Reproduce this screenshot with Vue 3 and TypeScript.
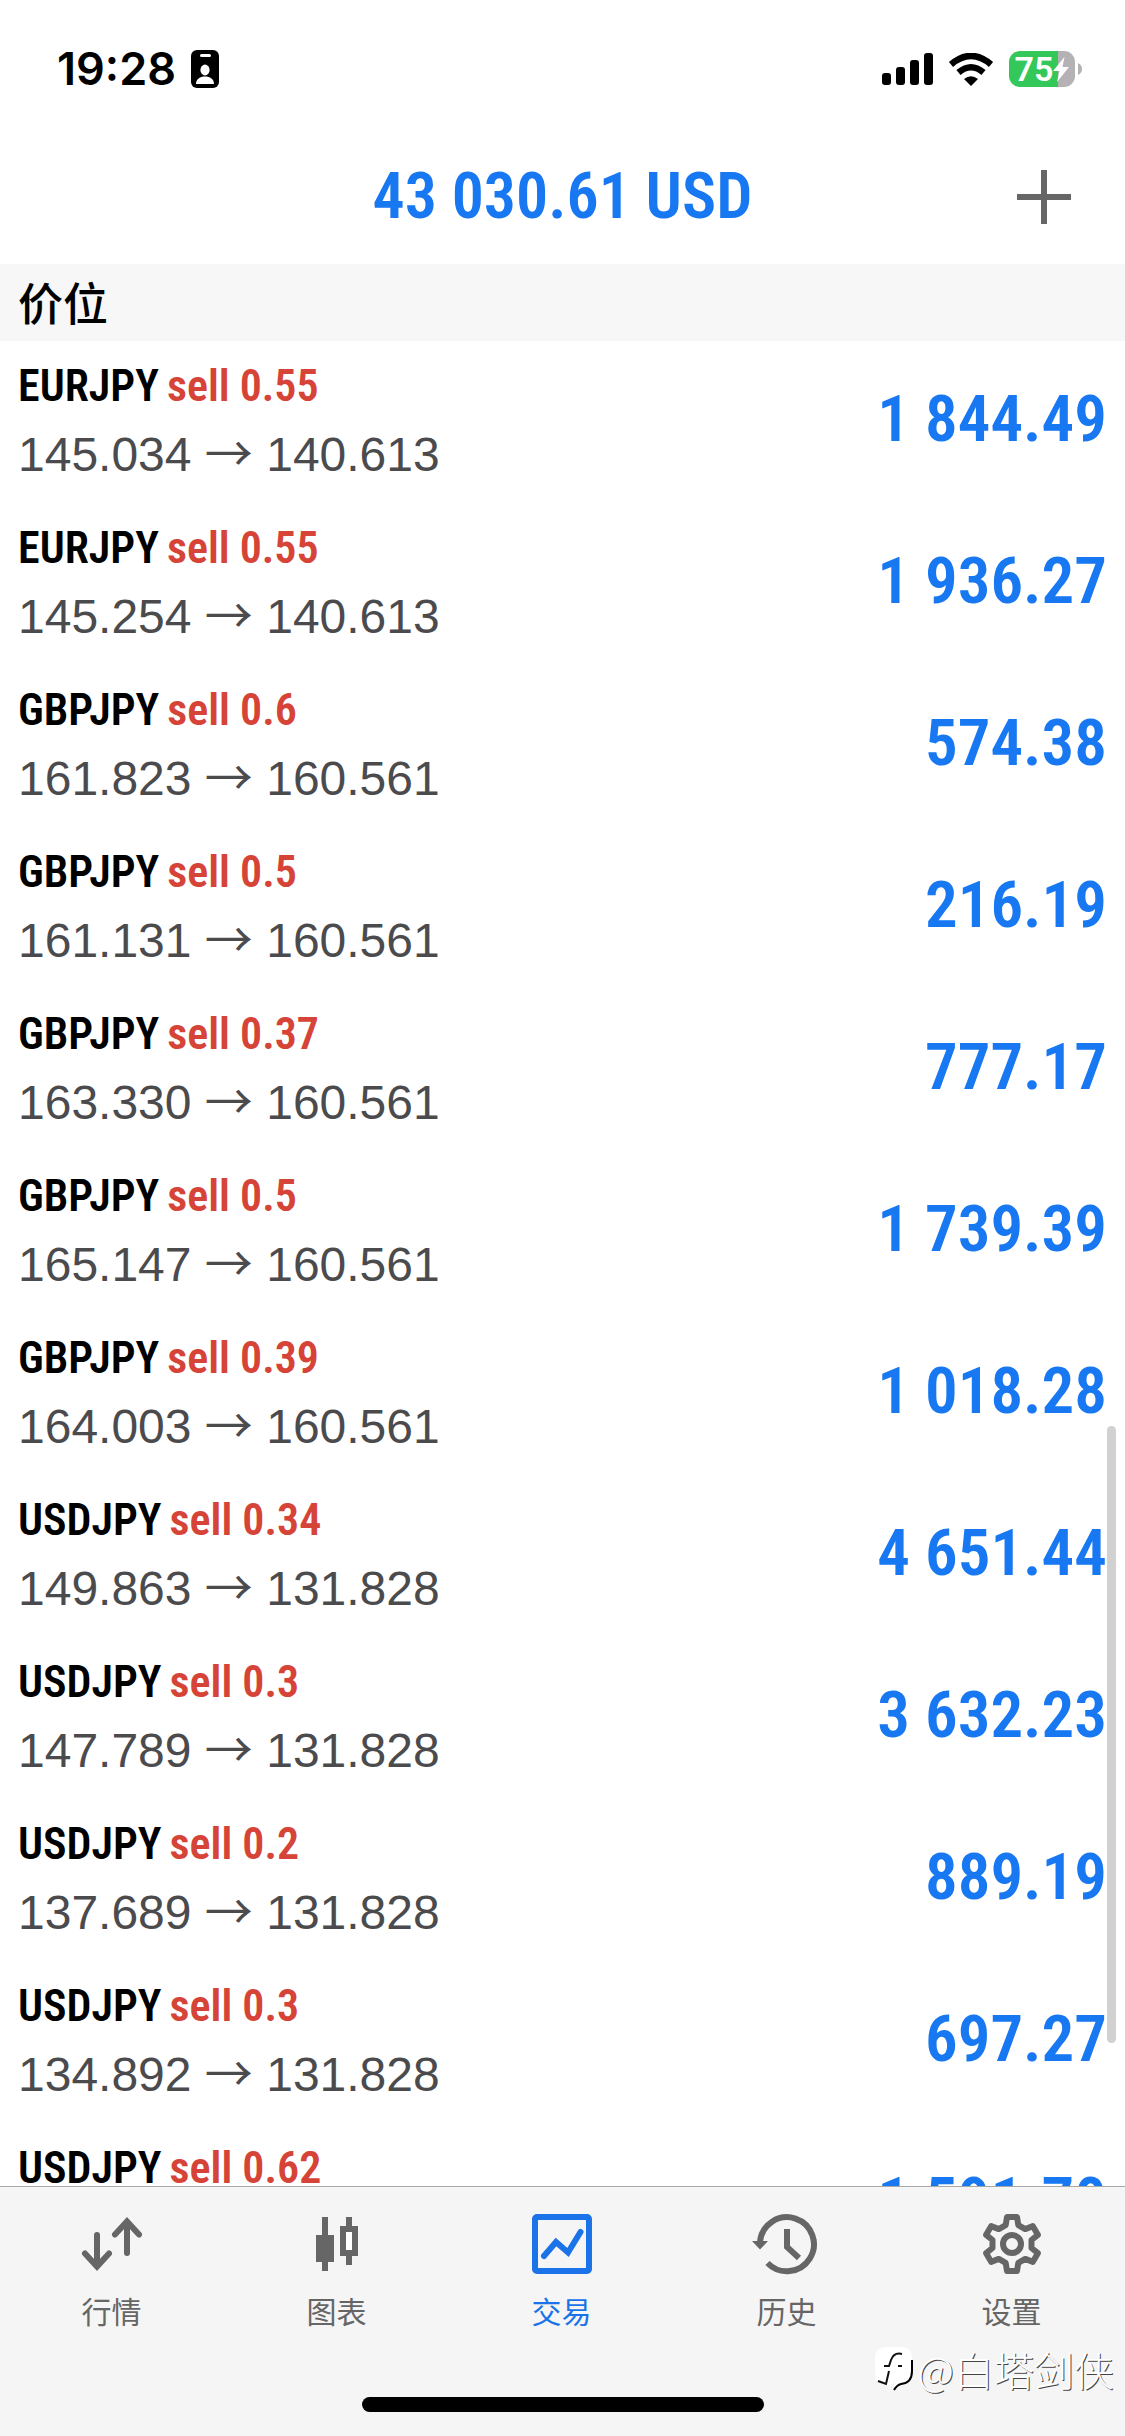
<script setup lang="ts">
interface Position {
  symbol: string
  volume: string
  open?: string
  current?: string
  profit: string
}

const balance = '43 030.61 USD'

const positions: Position[] = [
  { symbol: 'EURJPY', volume: '0.55', open: '145.034', current: '140.613', profit: '1 844.49' },
  { symbol: 'EURJPY', volume: '0.55', open: '145.254', current: '140.613', profit: '1 936.27' },
  { symbol: 'GBPJPY', volume: '0.6', open: '161.823', current: '160.561', profit: '574.38' },
  { symbol: 'GBPJPY', volume: '0.5', open: '161.131', current: '160.561', profit: '216.19' },
  { symbol: 'GBPJPY', volume: '0.37', open: '163.330', current: '160.561', profit: '777.17' },
  { symbol: 'GBPJPY', volume: '0.5', open: '165.147', current: '160.561', profit: '1 739.39' },
  { symbol: 'GBPJPY', volume: '0.39', open: '164.003', current: '160.561', profit: '1 018.28' },
  { symbol: 'USDJPY', volume: '0.34', open: '149.863', current: '131.828', profit: '4 651.44' },
  { symbol: 'USDJPY', volume: '0.3', open: '147.789', current: '131.828', profit: '3 632.23' },
  { symbol: 'USDJPY', volume: '0.2', open: '137.689', current: '131.828', profit: '889.19' },
  { symbol: 'USDJPY', volume: '0.3', open: '134.892', current: '131.828', profit: '697.27' },
  { symbol: 'USDJPY', volume: '0.62', profit: '1 591.70' },
]

const tabs = [
  { id: 'quotes', label: '行情' },
  { id: 'charts', label: '图表' },
  { id: 'trade', label: '交易' },
  { id: 'history', label: '历史' },
  { id: 'settings', label: '设置' },
]
const activeTab = 'trade'

// One tooth and one valley of the settings gear, repeated every 60 degrees.
const toothProfile = [[-5, -27], [5, -27], [6.3, -18.9], [13.2, -14.9]]
const gearPoints = Array.from({ length: 6 }, (_, i) => {
  const a = (i * Math.PI) / 3
  return toothProfile
    .map(([x, y]) => `${(30 + x * Math.cos(a) - y * Math.sin(a)).toFixed(2)},${(30 + x * Math.sin(a) + y * Math.cos(a)).toFixed(2)}`)
    .join(' ')
}).join(' ')
</script>

<template>
  <div class="screen">
    <div class="status">
      <div class="status-left">
        <span class="time">19:28</span>
        <svg class="badge" viewBox="0 0 28 38" aria-hidden="true">
          <rect width="28" height="38" rx="6" />
          <rect x="9" y="4" width="11" height="3" rx="1.5" fill="#fff" />
          <ellipse cx="14" cy="20" rx="4.6" ry="5.4" fill="#fff" />
          <path d="M5 34c0-5 4-7.500 9-7.500s9 2.500 9 7.500z" fill="#fff" />
        </svg>
      </div>
      <div class="status-right">
        <svg class="signal" viewBox="0 0 51 32" aria-hidden="true">
          <rect x="0" y="20" width="9" height="12" rx="3" />
          <rect x="14" y="14" width="9" height="18" rx="3" />
          <rect x="28" y="7" width="9" height="25" rx="3" />
          <rect x="42" y="0" width="9" height="32" rx="3" />
        </svg>
        <svg class="wifi" viewBox="0 0 46 33" aria-hidden="true">
          <path d="M3 11.500Q23-5.500 43 11.500" fill="none" stroke="#000" stroke-width="6.500" />
          <path d="M10.500 19.500Q23 9 35.500 19.500" fill="none" stroke="#000" stroke-width="6.500" />
          <path d="M23 33 16 26Q23 20.500 30 26Z" />
        </svg>
        <div class="battery">
          <span>75</span>
          <svg viewBox="0 0 16 25" aria-hidden="true"><path d="M11.500 0 0 14h6.500L4 25 16 10H9.500z" fill="#fff" /></svg>
        </div>
        <svg class="nub" viewBox="0 0 4 12" aria-hidden="true"><path d="M0 0q4 2 4 6t-4 6z" fill="#b5b2b5" /></svg>
      </div>
    </div>

    <header class="header">
      <h1>{{ balance }}</h1>
      <button class="add" type="button" aria-label="新订单">
        <svg viewBox="0 0 54 54"><path d="M0 27H54M27 0V54" stroke="#666" stroke-width="6" /></svg>
      </button>
    </header>

    <h2 class="section">价位</h2>

    <main class="list-area">
      <ul class="list">
        <li v-for="(p, i) in positions" :key="i" class="row">
          <div class="info">
            <div class="deal">
              <span>{{ p.symbol }}</span>
              <span class="side">sell {{ p.volume }}</span>
            </div>
            <div v-if="p.open" class="prices">{{ p.open }} <span class="arrow">→</span> {{ p.current }}</div>
          </div>
          <div class="profit">{{ p.profit }}</div>
        </li>
      </ul>
      <div class="scrollbar"></div>
    </main>

    <nav class="tabs">
      <button v-for="t in tabs" :key="t.id" type="button" class="tab" :class="{ active: t.id === activeTab }">
        <svg class="icon" viewBox="0 0 60 60" fill="none" stroke="currentColor" stroke-width="6" aria-hidden="true">
          <path v-if="t.id === 'quotes'" stroke-linecap="round" d="M15 21V52M3 39.500 15 52.500 27 39.500M45 39V8M33 20.500 45 7.500 57 20.500" />
          <g v-else-if="t.id === 'charts'">
            <path d="M18 3V57M42 3V12M42 42V51" />
            <rect x="9" y="21" width="18" height="27" fill="currentColor" stroke="none" />
            <rect x="36" y="15" width="12" height="24" fill="#fff" />
          </g>
          <g v-else-if="t.id === 'trade'">
            <rect x="3" y="3" width="54" height="54" rx="2" />
            <path stroke-linecap="round" d="M12 42 24 28 36 38.500 48.500 18" />
          </g>
          <g v-else-if="t.id === 'history'">
            <path d="M3 28A27 27 0 1 1 10.500 49" />
            <path d="M30 15V33L42 44" />
            <path d="M-5 27H11L3 35.500Z" fill="currentColor" stroke="none" />
          </g>
          <g v-else>
            <polygon :points="gearPoints" stroke-linejoin="round" />
            <circle cx="30" cy="30" r="9" />
          </g>
        </svg>
        <span>{{ t.label }}</span>
      </button>
      <div class="home-bar"></div>
    </nav>

    <div class="watermark">
      <svg viewBox="0 0 40 46" aria-hidden="true">
        <path d="M13 1H27Q38 1 38 12V25Q38 38 29 39L20 44V38L12 40 2 34Q1 30 1 26V12Q1 1 13 1Z" fill="#fff" />
        <path d="M38 14V25Q38 37 27 38Q23 39 20 44" fill="none" stroke="#000" stroke-width="2" />
        <path d="M28 8Q20 6 17 14L15 20H10M15 25 12 38 4 35M24 20H28" fill="none" stroke="#111" stroke-width="2" />
      </svg>
      <span>@白塔剑侠</span>
    </div>
  </div>
</template>

<style>
body {
  margin: 0;
}
</style>

<style scoped>
.screen {
  position: relative;
  display: flex;
  flex-direction: column;
  height: 100vh;
  overflow: hidden;
  background: #fff;
  color: #000;
  font-family: "Liberation Sans", "Noto Sans CJK SC", sans-serif;
}

.status {
  display: flex;
  justify-content: space-between;
  align-items: center;
  flex: none;
  height: 138px;
  padding: 0 43px 0 57px;
}

.status-left,
.status-right {
  display: flex;
  align-items: center;
}

.status-left {
  gap: 15px;
}

.time {
  font: 600 45px/56px Inter, sans-serif;
}

.badge {
  width: 28px;
  height: 38px;
}

.signal {
  width: 51px;
  height: 32px;
  margin-right: 15px;
}

.wifi {
  width: 46px;
  height: 33px;
  margin-right: 15px;
}

.battery {
  display: flex;
  align-items: center;
  justify-content: center;
  width: 66px;
  height: 36px;
  border-radius: 11px;
  background: linear-gradient(90deg, #34c759 74%, #b5b2b5 74%);
  color: #fff;
  font: 600 34px/36px Roboto, sans-serif;
}

.battery svg {
  width: 16px;
  height: 25px;
}

.nub {
  width: 4px;
  height: 12px;
  margin-left: 3px;
}

.header {
  display: grid;
  grid-template-columns: 1fr auto 1fr;
  align-items: center;
  flex: none;
  height: 118px;
  padding: 0 54px 8px;
}

h1 {
  grid-column: 2;
  margin: 0;
  color: #1778f2;
  font: 600 64px/80px "Roboto Condensed", "Liberation Sans", sans-serif;
}

.add {
  justify-self: end;
  width: 54px;
  height: 54px;
  padding: 0;
  border: 0;
  background: none;
}

.add svg,
.badge,
.signal,
.wifi,
.icon {
  display: block;
}

.section {
  flex: none;
  margin: 0;
  padding: 0 18px 2px;
  background: #f7f7f7;
  font: 500 45px/75px "Noto Sans CJK SC", sans-serif;
}

.list-area {
  position: relative;
  flex: 1;
  min-height: 0;
  overflow: hidden;
}

.list {
  margin: 0;
  padding: 0;
  list-style: none;
}

.row {
  display: flex;
  justify-content: space-between;
  height: 162px;
  padding: 0 18px;
}

.info {
  padding-top: 11px;
}

.deal {
  display: flex;
  gap: 8px;
  font: 600 44px/68px "Roboto Condensed", "Liberation Sans", sans-serif;
}

.side {
  color: #d64337;
}

.prices {
  color: #4b4b4e;
  font-size: 48px;
  line-height: 70px;
}

.arrow {
  font-family: "Noto Sans CJK SC", sans-serif;
  line-height: 1;
}

.profit {
  padding-top: 38px;
  color: #1778f2;
  font: 600 65px/80px "Roboto Condensed", "Liberation Sans", sans-serif;
}

.scrollbar {
  position: absolute;
  top: 1085px;
  right: 9px;
  width: 9px;
  height: 617px;
  border-radius: 5px;
  background: #d1d1d1;
}

.tabs {
  position: relative;
  display: flex;
  flex: none;
  height: 249px;
  border-top: 1px solid #a8a8a8;
  background: #f5f5f5;
}

.tab {
  display: flex;
  flex: 1;
  flex-direction: column;
  align-items: center;
  gap: 14px;
  padding: 27px 2px 0 0;
  border: 0;
  background: none;
  color: #666;
  font: 400 30px/44px "Noto Sans CJK SC", sans-serif;
}

.tab.active {
  color: #1a73e8;
}

.icon {
  width: 60px;
  height: 60px;
  overflow: visible;
}

.home-bar {
  position: absolute;
  bottom: 24px;
  left: 50%;
  width: 402px;
  height: 15px;
  border-radius: 8px;
  background: #000;
  transform: translateX(-50%);
}

.watermark {
  position: absolute;
  right: 11px;
  bottom: 39px;
  display: flex;
  align-items: center;
  gap: 4px;
  color: #fff;
  font: 300 40px/56px "Noto Sans CJK SC", sans-serif;
  text-shadow: 1px 1px 0 #444;
}

.watermark svg {
  width: 40px;
  height: 46px;
}
</style>
